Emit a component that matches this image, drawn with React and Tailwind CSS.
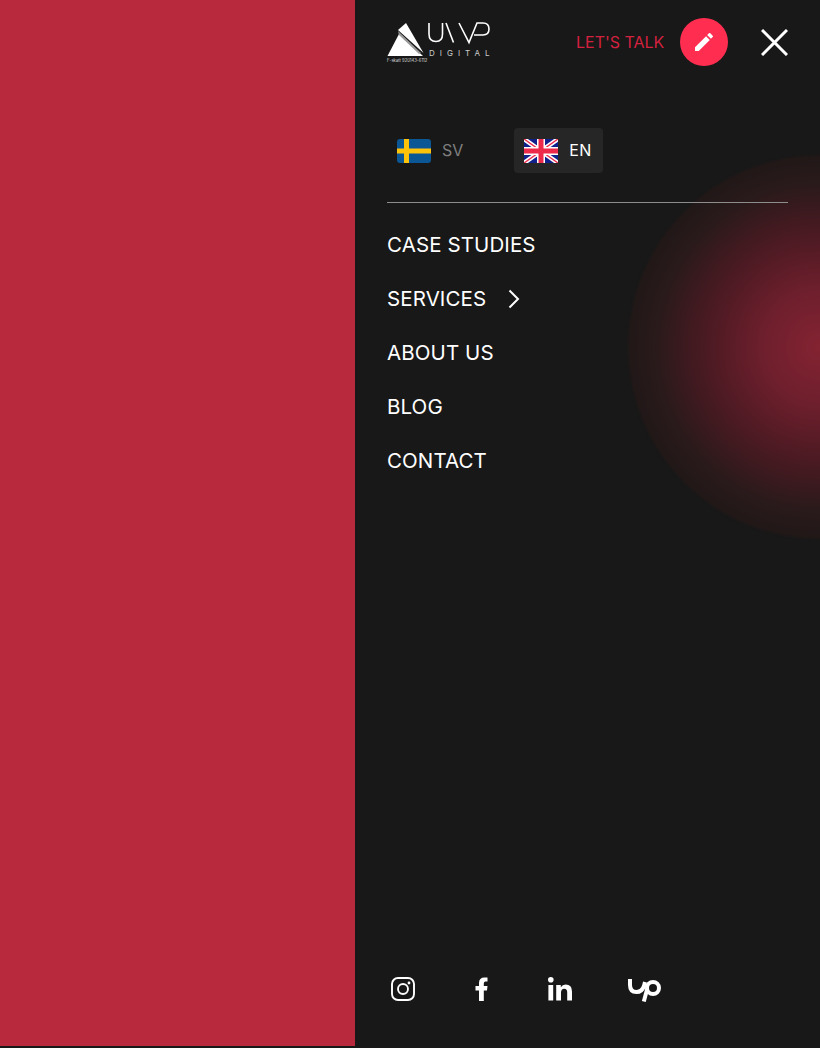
import React from "react";
import { MdEdit } from "react-icons/md";

const navItems = ["CASE STUDIES", "SERVICES", "ABOUT US", "BLOG", "CONTACT"];

const Logo = () => (
  <svg width="103" height="40" viewBox="0 0 103 40" className="block shrink-0 overflow-visible">
    <path d="M0.5 34 L12 12 L36 34 Z" fill="#fff" />
    <path d="M11 8 L19 1 L36.5 31 Z" fill="#fff" />
    <path d="M11 9 L12 13 L32 32 L34 31 Z" fill="#9a9a9a" />
    <g fill="none" stroke="#fff" strokeWidth="1.6">
      <path d="M42 1 V12 Q42 19.5 49 19.5 Q55.5 19.5 55.5 12 V1" />
      <path d="M59 1 L66.5 20.5" />
      <path d="M72 1 L82 20.5 L90 1 H96 Q102 1 102 7 Q102 13 96 13 H87" />
    </g>
    <text x="42" y="33.5" fill="#ccc" fontSize="8" letterSpacing="5" fontFamily="Inter, sans-serif">DIGITAL</text>
    <text x="0" y="39.5" fill="#ddd" fontSize="4.2" fontFamily="Inter, sans-serif">F-skatt 920143-6112</text>
  </svg>
);

const SwedenFlag = () => (
  <svg width="34" height="24" viewBox="0 0 34 24" className="block rounded-[3px]">
    <rect width="34" height="24" fill="#0b5795" />
    <rect x="7" width="5" height="24" fill="#fdc20a" />
    <rect y="9.5" width="34" height="5" fill="#fdc20a" />
  </svg>
);

const UkFlag = () => (
  <svg width="34" height="24" viewBox="0 0 34 24" className="block">
    <rect width="34" height="24" fill="#10218b" />
    <path d="M0 0 L34 24 M34 0 L0 24" stroke="#fff" strokeWidth="4.5" />
    <path d="M0 0 L34 24 M34 0 L0 24" stroke="#ee2a4a" strokeWidth="1.4" />
    <path d="M17 0 V24 M0 12 H34" stroke="#fff" strokeWidth="8" />
    <path d="M17 0 V24 M0 12 H34" stroke="#ee2a4a" strokeWidth="5" />
  </svg>
);

const Instagram = () => (
  <svg width="24" height="24" viewBox="0 0 24 24" fill="none" stroke="#fff" strokeWidth="1.9" className="block">
    <rect x="1" y="1" width="22" height="22" rx="6" />
    <circle cx="12" cy="12" r="5" />
    <circle cx="18" cy="6" r="1.4" fill="#fff" stroke="none" />
  </svg>
);

const Facebook = () => (
  <svg width="14" height="24" viewBox="0 0 14 24" fill="#fff" className="block">
    <path d="M4 24 V13.5 H0.5 V9 H4 V6 Q4 0.5 9.5 0.5 H12.5 V4.5 H10.5 Q8.8 4.5 8.8 6.5 V9 H12.5 L12 13.5 H8.8 V24 Z" />
  </svg>
);

const Linkedin = () => (
  <svg width="24" height="24" viewBox="0 0 24 24" fill="#fff" className="block">
    <circle cx="2.8" cy="2.8" r="2.8" />
    <rect x="0.4" y="8" width="4.8" height="15.5" />
    <path d="M8.2 8 H12.8 V10.2 Q14.4 7.6 17.6 7.6 Q24 7.6 24 14.5 V23.5 H19.2 V15.4 Q19.2 11.8 16.4 11.8 Q13 11.8 13 15.6 V23.5 H8.2 Z" />
  </svg>
);

const Upwork = () => (
  <svg width="33" height="26" viewBox="0 0 33 26" fill="none" stroke="#fff" strokeWidth="4" className="block">
    <path d="M2 3 V9 Q2 16 8.5 16 Q14 16 16 10 L17 6" />
    <circle cx="25" cy="12" r="6" />
    <path d="M19.2 13 L15.8 25.5" />
  </svg>
);

const App = () => {
  return (
    <div className="flex w-full h-[1048px] overflow-hidden bg-[#181818] font-['Inter',sans-serif]">
      <div className="w-[355px] h-[1046px] shrink-0 bg-[#b9293d]" />

      <div className="relative flex-1 flex flex-col h-full px-[32px] overflow-hidden">
        {/* red glow */}
        <div className="absolute left-[273px] top-[155px] w-[384px] h-[384px] rounded-full blur-[1px] bg-[radial-gradient(circle_closest-side,#842332_0%,#6e1f2d_30%,#4a1a22_60%,#2a1a1b_85%,#211818_100%)]" />

        <header className="relative flex items-center h-[84px]">
          <Logo />
          <span className="ml-[86px] w-[88px] shrink-0 text-[16px] text-[#d3213f] whitespace-nowrap">LET'S TALK</span>
          <button className="ml-[16px] w-[48px] h-[48px] shrink-0 rounded-full bg-[#ff2e51] flex items-center justify-center">
            <MdEdit size={24} color="#fff" />
          </button>
          <svg width="27" height="27" viewBox="0 0 27 27" className="ml-[33px] shrink-0" stroke="#fff" strokeWidth="3">
            <path d="M1 1 L26 26 M26 1 L1 26" />
          </svg>
        </header>

        <div className="relative flex items-center mt-[44px] h-[45px]">
          <div className="flex items-center gap-[11px] pl-[10px]">
            <SwedenFlag />
            <span className="text-[16px] text-[#7f7f7f] -mt-px">SV</span>
          </div>
          <div className="ml-[51px] flex items-center gap-[11px] h-[45px] px-[10px] rounded-[4px] bg-[#262626]">
            <UkFlag />
            <span className="w-[24px] text-[16px] text-white tracking-[0.4px] -mt-px">EN</span>
          </div>
        </div>

        <div className="relative mt-[29px] h-px bg-[#8d8d8d]" />

        <nav className="relative flex flex-col mt-[15px]">
          {navItems.map((item) => (
            <div key={item} className="flex items-center h-[54px] text-[20.5px] tracking-[0.1px] text-white whitespace-nowrap">
              {item}
              {item === "SERVICES" && (
                <svg width="12" height="20" viewBox="0 0 12 20" fill="none" stroke="#fff" strokeWidth="2" className="ml-[22px]">
                  <path d="M1.5 1.5 L10 10 L1.5 18.5" />
                </svg>
              )}
            </div>
          ))}
        </nav>

        <div className="relative mt-auto mb-[46px] flex items-center h-[26px]">
          <div className="ml-[4px]"><Instagram /></div>
          <div className="ml-[60px]"><Facebook /></div>
          <div className="ml-[59px]"><Linkedin /></div>
          <div className="ml-[56px]"><Upwork /></div>
        </div>
      </div>
    </div>
  );
};

export default App;
